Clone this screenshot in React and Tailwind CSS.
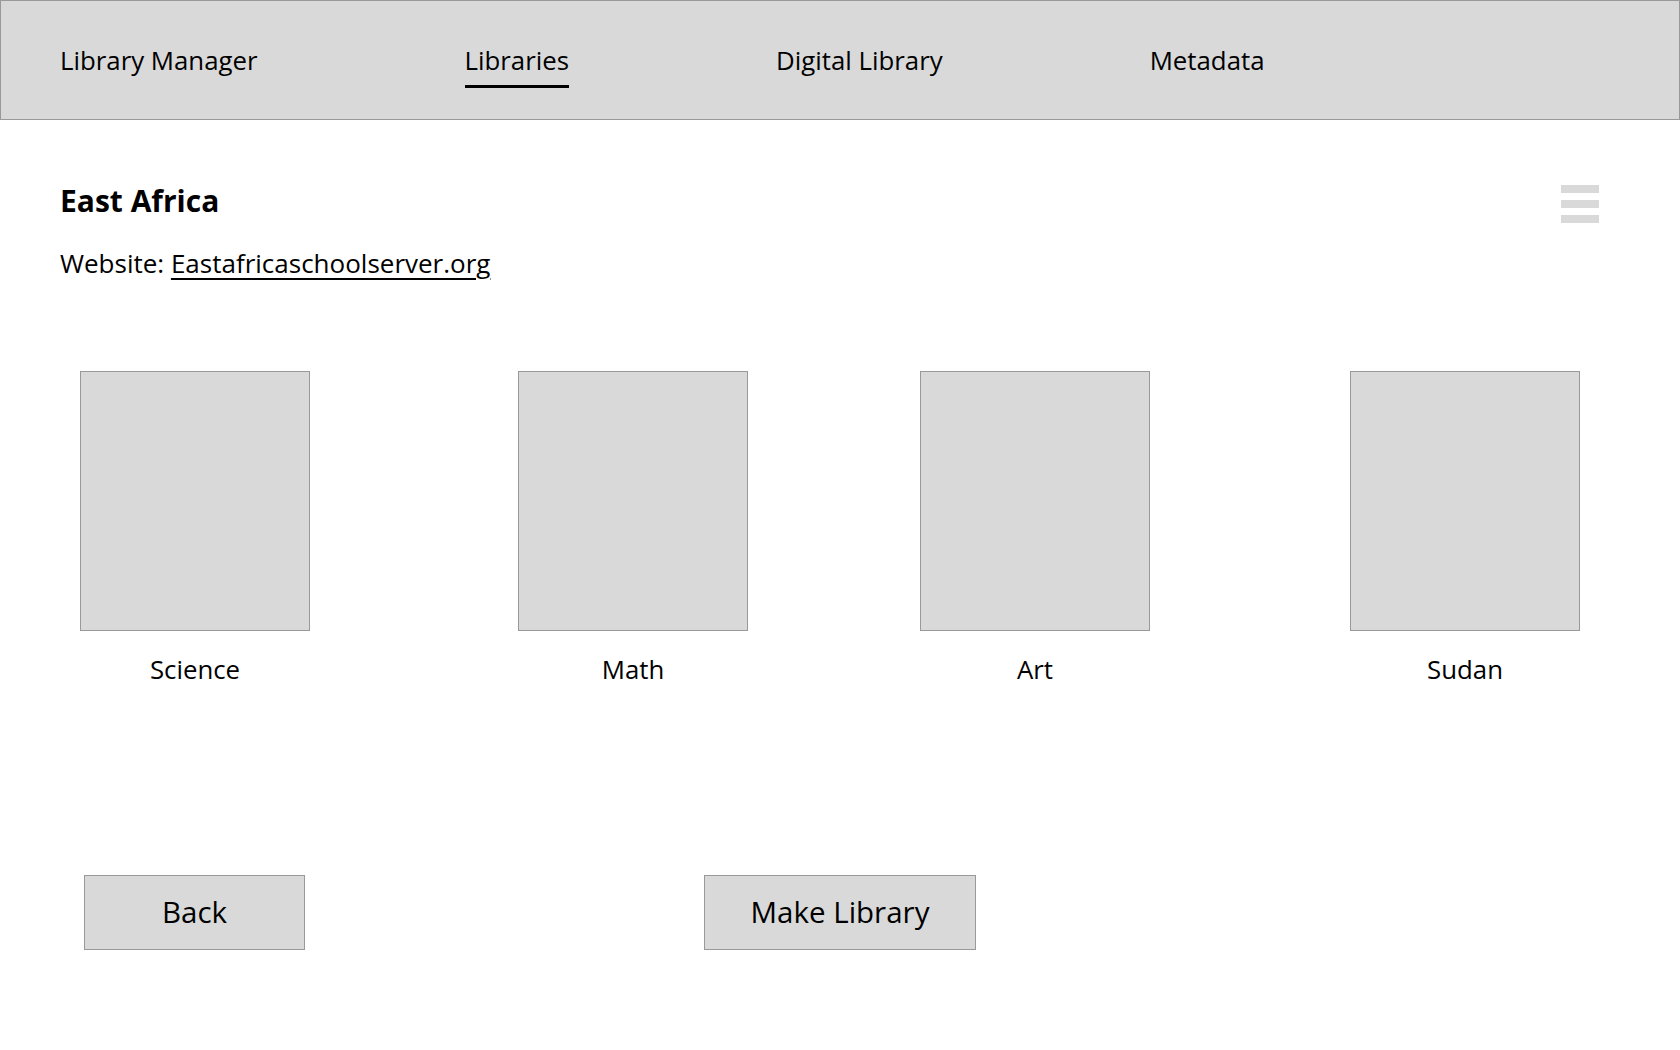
import React from 'react';

const navItems = ['Library Manager', 'Libraries', 'Digital Library', 'Metadata'];

const collections = [
  { name: 'Science', offset: 'ml-[20px]' },
  { name: 'Math', offset: 'ml-[208px]' },
  { name: 'Art', offset: 'ml-[172px]' },
  { name: 'Sudan', offset: 'ml-[200px]' },
];

function CollectionCard({ name, offset }) {
  return (
    <div className={`flex flex-col items-center w-[230px] ${offset}`}>
      <div className="w-[230px] h-[260px] bg-[#d9d9d9] border border-[#999999]" />
      <p className="mt-[20px] text-[25.8px] leading-[36px]">{name}</p>
    </div>
  );
}

export default function App() {
  return (
    <div className="min-h-screen bg-white text-black font-['Open_Sans',sans-serif]">
      <header className="h-[120px] bg-[#d9d9d9] border border-[#999999] flex items-start gap-[207px] pl-[59px] pt-[41px] text-[25.8px] leading-[36px]">
        {navItems.map((item) => (
          <span
            key={item}
            className={item === 'Libraries' ? 'border-b-[3px] border-black pb-[7px]' : ''}
          >
            {item}
          </span>
        ))}
      </header>

      <main className="px-[60px]">
        <div className="flex items-start justify-between">
          <div>
            <h1 className="mt-[61px] text-[30px] leading-[40px] font-bold">East Africa</h1>
            <p className="mt-[24px] text-[26px] leading-[36px]">
              Website: <a className="underline underline-offset-[5px]">Eastafricaschoolserver.org</a>
            </p>
          </div>
          <div className="mt-[65px] mr-[21px] flex flex-col gap-[7px]">
            <span className="block w-[38px] h-[8px] bg-[#d9d9d9]" />
            <span className="block w-[38px] h-[8px] bg-[#d9d9d9]" />
            <span className="block w-[38px] h-[8px] bg-[#d9d9d9]" />
          </div>
        </div>

        <div className="mt-[90px] flex">
          {collections.map((c) => (
            <CollectionCard key={c.name} {...c} />
          ))}
        </div>

        <div className="mt-[188px] flex">
          <button className="ml-[24px] w-[221px] h-[75px] bg-[#d9d9d9] border border-[#999999] text-[29.5px]">
            Back
          </button>
          <button className="ml-[399px] w-[272px] h-[75px] bg-[#d9d9d9] border border-[#999999] text-[29.5px]">
            Make Library
          </button>
        </div>
      </main>
    </div>
  );
}
